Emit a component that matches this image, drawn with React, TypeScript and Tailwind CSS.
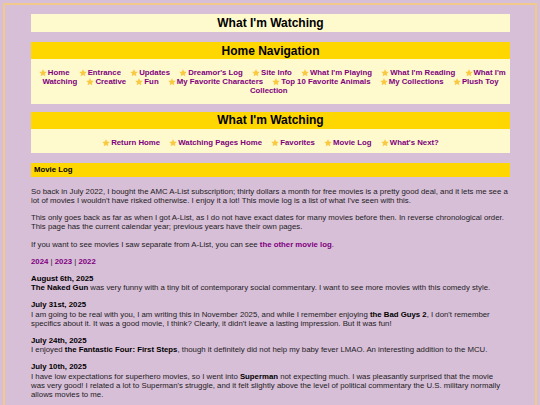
import React from "react";

const Star = () => (
  <svg viewBox="0 0 24 24" className="inline-block w-[8px] h-[8px] -my-[1px] mr-[1px]">
    <path d="M12 1.5l3.1 6.6 7.2.9-5.3 5 1.4 7.1L12 17.6l-6.4 3.5L7 14l-5.3-5 7.2-.9z" fill="#f9ca40" stroke="#f3b834" strokeWidth="0.6" />
  </svg>
);

const NavItem = ({ label }: { label: string }) => (
  <>
    <span className="mx-[3.5px]">
      <Star />
      <a className="text-[#800080]">{label}</a>
    </span>{" "}
  </>
);

const homeNav = [
  "Home",
  "Entrance",
  "Updates",
  "Dreamor's Log",
  "Site Info",
  "What I'm Playing",
  "What I'm Reading",
  "What I'm Watching",
  "Creative",
  "Fun",
  "My Favorite Characters",
  "Top 10 Favorite Animals",
  "My Collections",
  "Plush Toy Collection",
];

const watchNav = ["Return Home", "Watching Pages Home", "Favorites", "Movie Log", "What's Next?"];

export default function App() {
  return (
    <div className="bg-[#d8bfd8] min-h-[405px] pt-[3px] pl-[3px] pr-[3px] overflow-hidden" style={{ fontFamily: '"Liberation Sans", Arial, sans-serif' }}>
      <div className="border-2 border-[#f1c98d] min-h-[420px] pt-[9px] pl-[26px] pr-[25px] text-[#1c1c1c]">
        <div className="bg-[#fffacd] text-center text-[12px] font-bold leading-[14px] py-[2px] text-black">What I'm Watching</div>

        <div className="mt-[10px]">
          <div className="bg-[#ffd700] text-center text-[12px] font-bold leading-[14px] py-[1.5px] text-black">Home Navigation</div>
          <div className="bg-[#fffacd] text-center text-[7.8px] leading-[9.2px] font-bold pt-[9px] pb-[8px] px-[2px]">
            {homeNav.map((l) => (
              <NavItem key={l} label={l} />
            ))}
          </div>
        </div>

        <div className="mt-[8px]">
          <div className="bg-[#ffd700] text-center text-[12px] font-bold leading-[14px] py-[1.5px] text-black">What I'm Watching</div>
          <div className="bg-[#fffacd] text-center text-[7.8px] leading-[9.2px] font-bold pt-[9px] pb-[6px]">
            {watchNav.map((l) => (
              <NavItem key={l} label={l} />
            ))}
          </div>
        </div>

        <div className="mt-[10px] bg-[#ffd700] h-[14px] flex items-center pl-[3px] text-[7.8px] font-bold text-black">Movie Log</div>

        <div className="text-[7.8px] leading-[9.2px] mt-[10px] flex flex-col gap-[8px]">
          <p>
            So back in July 2022, I bought the AMC A-List subscription; thirty dollars a month for free movies is a pretty good deal, and it lets me see a lot of movies I wouldn't have risked otherwise. I enjoy it a lot! This movie log is a list of what I've seen with this.
          </p>
          <p>
            This only goes back as far as when I got A-List, as I do not have exact dates for many movies before then. In reverse chronological order. This page has the current calendar year; previous years have their own pages.
          </p>
          <p>
            If you want to see movies I saw separate from A-List, you can see <a className="font-bold text-[#800080]">the other movie log</a>.
          </p>
          <p>
            <a className="font-bold text-[#800080]">2024</a> | <a className="font-bold text-[#800080]">2023</a> | <a className="font-bold text-[#800080]">2022</a>
          </p>
          <p>
            <b className="text-black">August 6th, 2025</b>
            <br />
            <b className="text-black">The Naked Gun</b> was very funny with a tiny bit of contemporary social commentary. I want to see more movies with this comedy style.
          </p>
          <p>
            <b className="text-black">July 31st, 2025</b>
            <br />
            I am going to be real with you, I am writing this in November 2025, and while I remember enjoying <b className="text-black">the Bad Guys 2</b>, I don't remember specifics about it. It was a good movie, I think? Clearly, it didn't leave a lasting impression. But it was fun!
          </p>
          <p>
            <b className="text-black">July 24th, 2025</b>
            <br />
            I enjoyed <b className="text-black">the Fantastic Four: First Steps</b>, though it definitely did not help my baby fever LMAO. An interesting addition to the MCU.
          </p>
          <p>
            <b className="text-black">July 10th, 2025</b>
            <br />
            I have low expectations for superhero movies, so I went into <b className="text-black">Superman</b> not expecting much. I was pleasantly surprised that the movie
            <br />
            was very good! I related a lot to Superman's struggle, and it felt slightly above the level of political commentary the U.S. military normally
            <br />
            allows movies to me.
          </p>
        </div>
      </div>
    </div>
  );
}
